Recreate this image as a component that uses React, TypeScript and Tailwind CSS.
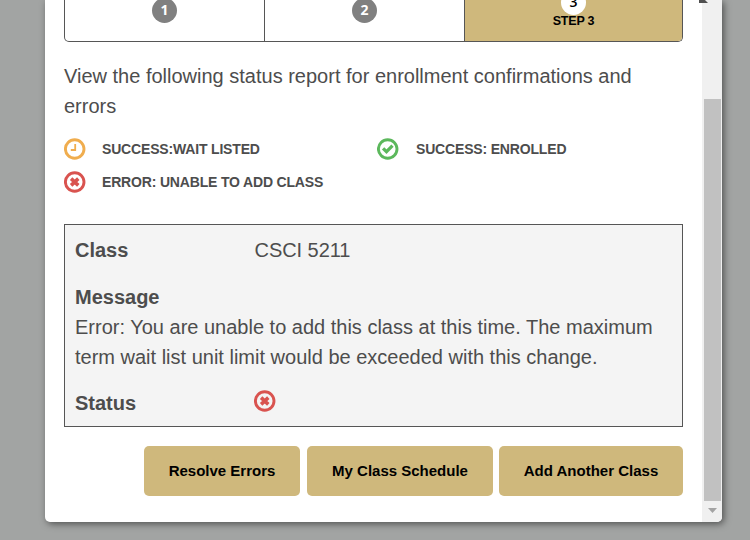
import React from 'react';

type Kind = 'wait' | 'ok' | 'error';

function StatusIcon({ kind }: { kind: Kind }) {
  const color = kind === 'wait' ? '#f0ad4e' : kind === 'ok' ? '#5cb85c' : '#d9534f';
  return (
    <svg className="block h-[22px] w-[22px] shrink-0" viewBox="0 0 22 22" fill="none">
      <circle cx="10.7" cy="11" r="9.3" stroke={color} strokeWidth="2.9" />
      {kind === 'wait' && <path d="M11.2 6V12H6.8" stroke={color} strokeWidth="1.8" />}
      {kind === 'ok' && <path d="M6.1 10.3l3.4 3.4 6-6" stroke={color} strokeWidth="3.2" />}
      {kind === 'error' && <path d="M7.1 7.7l7.2 6.6M14.3 7.7l-7.2 6.6" stroke={color} strokeWidth="3.6" />}
    </svg>
  );
}

function Legend({ kind, gap, children }: { kind: Kind; gap: string; children: React.ReactNode }) {
  return (
    <div className={`flex h-[33px] items-center text-[14px] font-bold tracking-[-0.17px] whitespace-nowrap ${gap}`}>
      <div className="pb-[2px]"><StatusIcon kind={kind} /></div>
      {children}
    </div>
  );
}

function Button({ className, children }: { className: string; children: React.ReactNode }) {
  return (
    <button className={`h-[50px] rounded-[5px] bg-[#cfb87c] text-[15px] font-bold whitespace-nowrap text-black ${className}`}>
      {children}
    </button>
  );
}

export default function App() {
  return (
    <div className="h-[540px] w-[750px] overflow-hidden bg-[#a2a4a3] pl-[45px] font-['Liberation_Sans',Arial,sans-serif] text-[#4d4d4d]">
      <div className="flex h-[522px] w-[677px] overflow-hidden rounded-b-[5px] bg-white shadow-[2px_2px_7px_rgba(0,0,0,0.5)]">
        <main className="w-[657px] pr-[19px] pl-[19px]">
          <div className="flex h-[42px] w-[619px] overflow-hidden rounded-b-[5px] border border-t-0 border-[#565656]">
            <div className="flex w-[200px] justify-center border-r border-[#565656]">
              <span className="-mt-[2px] flex h-[25px] w-[25px] items-center justify-center rounded-full bg-[#808080] pb-[3px] font-['Open_Sans',sans-serif] text-[14px] font-bold text-white">1</span>
            </div>
            <div className="flex w-[200px] justify-center border-r border-[#565656]">
              <span className="-mt-[2px] flex h-[25px] w-[25px] items-center justify-center rounded-full bg-[#808080] pb-[3px] font-['Open_Sans',sans-serif] text-[14px] font-bold text-white">2</span>
            </div>
            <div className="flex flex-1 flex-col items-center bg-[#cfb87c] text-black">
              <span className="-mt-[10px] flex h-[25px] w-[25px] shrink-0 items-center justify-center rounded-full bg-white pb-[2px] font-['Open_Sans',sans-serif] text-[14px] leading-[14px] font-semibold">3</span>
              <span className="-mt-px text-[12.5px] leading-[14px] font-bold tracking-[-0.2px]">STEP 3</span>
            </div>
          </div>
          <p className="mt-[19px] h-[60px] text-[20px] leading-[30px]">
            View the following status report for enrollment confirmations and
            <br />
            errors
          </p>
          <div className="mt-[12px] grid h-[66px] grid-cols-[313px_306px]">
            <Legend kind="wait" gap="gap-[16px]">SUCCESS:WAIT LISTED</Legend>
            <Legend kind="ok" gap="gap-[17px]">SUCCESS: ENROLLED</Legend>
            <Legend kind="error" gap="gap-[16px]">ERROR: UNABLE TO ADD CLASS</Legend>
          </div>
          <section className="mt-[25px] h-[203px] w-[619px] border border-[#565656] bg-[#f4f4f4] px-[10px] pt-[10px] text-[20px] leading-[30px]">
            <div className="flex">
              <b className="w-[179.5px]">Class</b>
              <span className="tracking-[-0.05px]">CSCI 5211</span>
            </div>
            <b className="mt-[17px] block">Message</b>
            <p className="whitespace-nowrap">
              Error: You are unable to add this class at this time. The maximum
              <br />
              term wait list unit limit would be exceeded with this change.
            </p>
            <div className="mt-[16px] flex">
              <b className="w-[179px]">Status</b>
              <div className="pt-[2px]"><StatusIcon kind="error" /></div>
            </div>
          </section>
          <div className="mt-[19px] flex justify-end">
            <Button className="mr-[7px] w-[156px]">Resolve Errors</Button>
            <Button className="mr-[6px] w-[186px]">My Class Schedule</Button>
            <Button className="w-[184px]">Add Another Class</Button>
          </div>
        </main>
        <div className="flex w-[20px] flex-col items-center bg-[#f0f0f0]">
          <svg className="-ml-[6px] h-[3px] w-full" viewBox="0 0 20 3"><path d="M0 0h6l3 3H0z" fill="#505050" /></svg>
          <div className="mt-[96px] mr-px ml-[2px] h-[402px] w-[17px] bg-[#c1c1c1]" />
          <svg className="mt-[7px] h-[5px] w-[9px]" viewBox="0 0 9 5"><path d="M0 0h9L4.5 5z" fill="#a3a3a3" /></svg>
        </div>
      </div>
    </div>
  );
}
